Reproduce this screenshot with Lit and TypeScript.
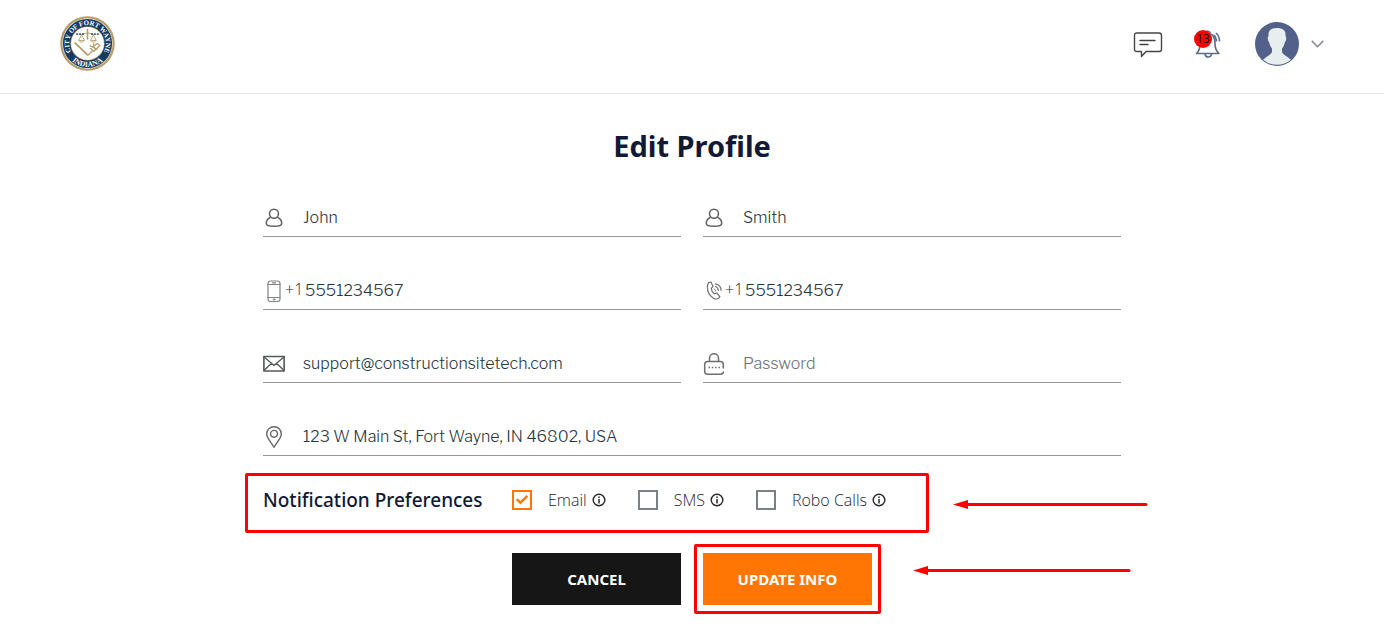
import { LitElement, html, css, svg, nothing } from "lit";
import { customElement, property, state } from "lit/decorators.js";

const icons: Record<string, unknown> = {
  user: svg`<g stroke="#5c5e60" stroke-width="1.5"><circle cx="11" cy="6.8" r="4.5"/><path d="M7 10.600C4.800 11.600 3.300 13.600 3.300 16.400c0 1.800 2.800 2.800 7.700 2.800s7.700-1 7.700-2.800c0-2.800-1.500-4.800-3.700-5.800"/></g>`,
  mobile: svg`<g stroke="#808488"><rect x="5" y="1" width="12" height="20.500" rx="2.500" stroke-width="1.200"/><path d="M5 4.500h12M5 17.500h12M9.500 2.800h3" stroke-width="1.200"/><circle cx="11" cy="19.500" r=".8"/></g>`,
  phone: svg`<g stroke="#707376" stroke-width="1.200"><path d="M6.200 2.300 8 2l2 4.500-1.800 1.800c.2 2.400 1.300 4.300 3.200 5.600l2.300-.9 3.200 3.600-1.300 1.700c-1.500 1-3.600.8-5.500-.4-3.700-2.400-5.700-6.200-5.700-10.700 0-2.500.5-4.200 1.800-4.900z"/><path d="M12.500 6.500c1.700.6 2.800 2 2.800 4M12.500 3.900c3.100.7 5.500 3 5.600 6.400"/><path d="m11 9 1.300.8.4 1.500" stroke-width=".8"/></g>`,
  mail: svg`<g stroke="#55585a"><rect x=".9" y="3.500" width="20.200" height="14.500" stroke-width="1.600"/><path d="m1 4 7.500 6.300 2.500 2.100 2.500-2.100L21 4M1 17.500l7.500-7.200M21 17.500l-7.500-7.200" stroke-width="1.300"/></g>`,
  lock: svg`<g stroke="#6c6e70" stroke-width="1.500"><path d="M20.300 15v-3.500q0-3-3-3H4.700q-3 0-3 3v7q0 2.700 3 2.700h12.600q3 0 3-2.200M6.500 8.500V5.200a4.500 4.500 0 0 1 9 0v3.300"/><path d="M5.500 14.500h11.500" stroke-linecap="butt" stroke-dasharray="1.500 1.800"/></g>`,
  pin: svg`<g stroke="#66696b" stroke-width="1.400"><path d="M11 21.300C8.500 16.500 3.700 12.500 3.700 8a7.300 7.300 0 0 1 14.600 0c0 4.500-4.800 8.500-7.300 13.300z"/><circle cx="11" cy="7.800" r="3.400"/></g>`,
};

@customElement("profile-field")
class ProfileField extends LitElement {
  @property() icon = "user";
  @property() label = "";
  @property() type = "text";
  @property() value = "";
  @property() prefixText = "";

  static styles = css`
    :host { display: block; min-width: 0; }
    .field { display: flex; align-items: center; height: 38px; border-bottom: 1px solid #959799; box-sizing: border-box; }
    .icon { flex: none; width: 22px; height: 22px; margin-right: 18px; fill: none; stroke-linejoin: round; stroke-linecap: round; }
    .icon.tight { margin-right: 0; }
    .code { font: 300 16px/20px "Open Sans", sans-serif; color: #1f2b33; width: 20px; padding-bottom: 4px; white-space: nowrap; }
    input { flex: 1; min-width: 0; width: 0; height: 36px; padding: 0; border: 0; outline: 0; background: none; color: #2b363d; font: 300 16px/20px "Libre Franklin", Inter, sans-serif; }
    input::placeholder { color: #6f7275; opacity: 1; }
  `;

  render() {
    return html`<div class="field">
      <svg class="icon ${this.prefixText ? "tight" : ""}" viewBox="0 0 22 22" aria-hidden="true">${icons[this.icon]}</svg>
      ${this.prefixText ? html`<span class="code">${this.prefixText}</span>` : nothing}
      <input type=${this.type} aria-label=${this.label} .value=${this.value}
        placeholder=${this.label} @input=${(e: Event) => (this.value = (e.target as HTMLInputElement).value)} />
    </div>`;
  }
}

@customElement("city-seal")
class CitySeal extends LitElement {
  static styles = css`
    :host { display: block; }
    svg { display: block; width: 55px; height: 55px; font-family: "Liberation Serif", serif; font-weight: bold; }
  `;
  render() {
    return html`<svg viewBox="0 0 56 56" role="img" aria-label="City of Fort Wayne, Indiana">
      <defs><path id="top" d="M14 40.400A18.700 18.700 0 1 1 42 40.400"/><path id="bottom" d="M5 34A23.800 23.800 0 0 0 51 34"/></defs>
      <circle cx="28" cy="28" r="27.800" fill="#b69c68"/>
      <circle cx="28" cy="28" r="25.600" fill="#f1ecdf"/>
      <circle cx="28" cy="28" r="25" fill="#153b64"/>
      <circle cx="28" cy="28" r="17.400" fill="#b69c68"/>
      <circle cx="28" cy="28" r="16.700" fill="#fff"/>
      <text fill="#fff" font-size="7"><textPath href="#top" startOffset="50%" text-anchor="middle">CITY OF FORT WAYNE</textPath></text>
      <text fill="#fff" font-size="7.800"><textPath href="#bottom" startOffset="50%" text-anchor="middle">INDIANA</textPath></text>
      <g fill="none" stroke="#b69c68" stroke-width=".9">
        <path d="M28 13v11" stroke-width="1.600"/><path d="M22 18.500q6-2.500 12 0M22 19l-3 6h6zM34 19l-3 6h6z"/>
        <path d="M20 26a2.500 1.500 0 0 0 4 0M32 26a2.500 1.500 0 0 0 4 0"/>
        <path d="m15 27 13.500 13" stroke-width="1.800"/><path d="m28.500 40 5-5" stroke-width="1.400"/>
        <path d="m31 33 7-5 2.500 2-6 6zM30 30l8 4M34 28l2 7" stroke-width="1.300"/>
      </g>
      <path d="M16.500 18.500h8M31.500 18.500h8" stroke="#4c5f78" stroke-width="1.800" stroke-dasharray="2 1"/>
    </svg>`;
  }
}

@customElement("app-root")
class AppRoot extends LitElement {
  @state() prefs = [
    { id: "email", label: "Email", on: true },
    { id: "sms", label: "SMS", on: false },
    { id: "robo", label: "Robo Calls", on: false },
  ];

  static styles = css`
    :host { display: block; background: #fff; color: #101935; font-family: "Noto Sans", "Open Sans", sans-serif; }
    header { display: flex; align-items: center; justify-content: space-between; height: 94px; padding: 0 60px 6px; box-sizing: border-box; border-bottom: 1px solid #ebebeb; }
    nav { display: flex; align-items: center; }
    button { font: inherit; border: 0; padding: 0; margin: 0; background: none; cursor: pointer; }
    nav svg { display: block; fill: none; }
    .bell { position: relative; margin: 0 31px; }
    .count { position: absolute; left: 0; top: 1px; width: 18px; height: 18px; border-radius: 50%; background: #f00; color: #1a0000; font-family: "Open Sans", sans-serif; font-size: 12px; line-height: 17px; text-align: center; }
    .account { display: flex; align-items: center; gap: 12px; }
    main { max-width: 858px; margin: 0 auto; padding: 32px 24px 31px; }
    h1 { margin: 0 0 33px; text-align: center; font-size: 29px; line-height: 40px; font-weight: 700; }
    .fields { display: grid; grid-template-columns: 1fr 1fr; gap: 35px 22px; }
    .wide { grid-column: 1 / -1; }
    .prefs, .actions { position: relative; display: flex; align-items: center; }
    .prefs { margin-top: 29px; height: 30px; }
    h2 { margin: 0; width: 249px; font-size: 19px; line-height: 24px; font-weight: 500; }
    .options { display: flex; gap: 32px; }
    .option { display: flex; align-items: center; font: 300 16px/20px "Open Sans", sans-serif; color: #20282e; }
    .option label { display: flex; align-items: center; gap: 16px; }
    .box { appearance: none; width: 20px; height: 20px; margin: 0; border: 2px solid #7b8084; background: #fff; display: grid; place-items: center; }
    .box:checked { border-color: #ff7605; }
    .box:checked::before { content: ""; width: 16px; height: 16px; background: #ff7605; clip-path: polygon(12% 50%, 23% 39%, 40% 56%, 78% 18%, 89% 29%, 40% 78%); }
    .info { margin-left: 5px; }
    .info svg { display: block; }
    .actions { margin: 38px 0 0; padding-left: 249px; gap: 22px; }
    .btn { width: 169px; height: 52px; color: #fff; background: #161616; font-size: 15px; line-height: 20px; font-weight: 700; }
    .primary { background: #ff7605; }
    .submit { position: relative; }
    .frame { position: absolute; border: 3px solid #f00; border-radius: 2px; box-sizing: border-box; pointer-events: none; }
    .frame-prefs { left: -18px; top: -12px; width: 684px; height: 60px; }
    .frame-submit { inset: -9px; }
    .arrow { position: absolute; height: 10px; }
    .arrow-prefs { left: 690px; top: 14px; width: 195px; }
    .arrow-submit { left: 650px; top: 12px; width: 218px; }
  `;

  arrow(cls: string, w: number) {
    return html`<svg class="arrow ${cls}" viewBox="0 0 ${w} 10" aria-hidden="true">
      <path d="M0 5.500 15 1v9z" fill="#f00"/><path d="M14 5.500H${w - 2}" stroke="#f00" stroke-width="3" stroke-linecap="round"/></svg>`;
  }

  toggle(id: string) {
    this.prefs = this.prefs.map((p) => (p.id === id ? { ...p, on: !p.on } : p));
  }

  render() {
    return html`
      <header>
        <city-seal></city-seal>
        <nav aria-label="Account">
          <button aria-label="Messages">
            <svg width="30" height="28" viewBox="0 0 30 28" stroke="#454545" stroke-width="1.400" stroke-linejoin="round" stroke-linecap="round">
              <path d="M4 3h22q2.500 0 2.500 2.500v14q0 2-2.500 2H13l-4.500 5v-5H4q-2.500 0-2.500-2V5.500Q1.500 3 4 3z"/><path d="M7 10.500h15M7 14.500h8"/>
            </svg>
          </button>
          <button class="bell" aria-label="13 notifications">
            <svg width="30" height="30" viewBox="0 0 30 30" stroke="#5d6b8a" stroke-width="1.600" stroke-linejoin="round">
              <path d="M2.500 24.500c3-2.500 3.500-5 3.500-10 0-5 1.500-9 5-10V3.300q2.500-2 5 0v1.200c4 1.500 5 5 5 10s1 7.500 4 10z"/>
              <path d="M11 25q.5 3 3.300 3t3.200-3M19.500 6c2 1.500 2.800 3.500 3 6.500M22 4c2.500 2 3.500 5 3.500 8.500"/>
            </svg>
            <span class="count">13</span>
          </button>
          <button class="account" aria-label="Account menu">
            <svg width="44" height="44" viewBox="0 0 44 44">
              <circle cx="22" cy="22" r="22" fill="#53608a"/>
              <path d="M22 6c6 0 9 2.500 8.500 8 1.300 1 .8 5-.8 6.500-.4 2.800-1.600 4.700-2.700 6v3.500c1 2.500 4.500 4 9 7.800A22 22 0 0 1 8 37.800c4.500-3.800 8-5.300 9-7.800v-3.500c-1.100-1.300-2.300-3.200-2.700-6-1.600-1.500-2.100-5.500-.8-6.500C13 8.500 16 6 22 6z" fill="#e6eeef"/>
            </svg>
            <svg width="13" height="8" viewBox="0 0 13 8" stroke="#838792" stroke-width="1.500"><path d="m.8.9 5.700 5.800L12.200.9"/></svg>
          </button>
        </nav>
      </header>
      <main>
        <h1>Edit Profile</h1>
        <div class="fields">
          <profile-field icon="user" label="First name" value="John"></profile-field>
          <profile-field icon="user" label="Last name" value="Smith"></profile-field>
          <profile-field icon="mobile" type="tel" label="Mobile" prefixText="+1" value="5551234567"></profile-field>
          <profile-field icon="phone" type="tel" label="Phone" prefixText="+1" value="5551234567"></profile-field>
          <profile-field icon="mail" type="email" label="Email" value="support@constructionsitetech.com"></profile-field>
          <profile-field icon="lock" type="password" label="Password"></profile-field>
          <profile-field class="wide" icon="pin" label="Address" value="123 W Main St, Fort Wayne, IN 46802, USA"></profile-field>
        </div>
        <section class="prefs" aria-labelledby="prefs-title">
          <h2 id="prefs-title">Notification Preferences</h2>
          <div class="options">
            ${this.prefs.map((p) => html`<div class="option">
              <label><input class="box" type="checkbox" .checked=${p.on} @change=${() => this.toggle(p.id)} />${p.label}</label>
              <button class="info" aria-label="About ${p.label}">
                <svg width="14" height="14" viewBox="0 0 14 14" fill="none" stroke="#26282a"><circle cx="7" cy="7" r="5.800" stroke-width="1.400"/><path d="M7 3.500v1.500M7 6v4.500" stroke-width="1.500"/></svg>
              </button>
            </div>`)}
          </div>
          <div class="frame frame-prefs"></div>
          ${this.arrow("arrow-prefs", 195)}
        </section>
        <div class="actions">
          <button class="btn">CANCEL</button>
          <div class="submit"><button class="btn primary">UPDATE INFO</button><div class="frame frame-submit"></div></div>
          ${this.arrow("arrow-submit", 218)}
        </div>
      </main>
    `;
  }
}
